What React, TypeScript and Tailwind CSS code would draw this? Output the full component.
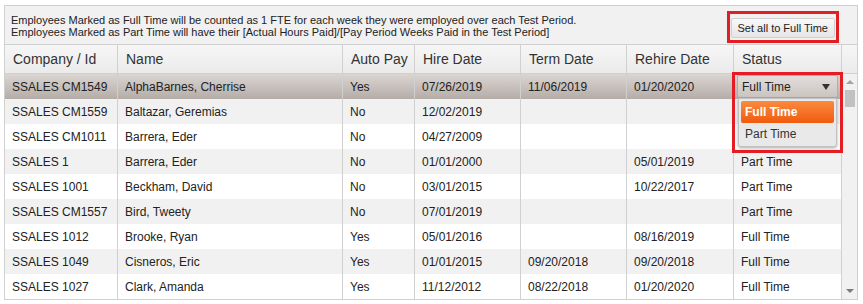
import React from "react";

const rows = [
  { id: "SSALES CM1549", name: "AlphaBarnes, Cherrise", auto: "Yes", hire: "07/26/2019", term: "11/06/2019", rehire: "01/20/2020", status: "Full Time" },
  { id: "SSALES CM1559", name: "Baltazar, Geremias", auto: "No", hire: "12/02/2019", term: "", rehire: "", status: "" },
  { id: "SSALES CM1011", name: "Barrera, Eder", auto: "No", hire: "04/27/2009", term: "", rehire: "", status: "" },
  { id: "SSALES 1", name: "Barrera, Eder", auto: "No", hire: "01/01/2000", term: "", rehire: "05/01/2019", status: "Part Time" },
  { id: "SSALES 1001", name: "Beckham, David", auto: "No", hire: "03/01/2015", term: "", rehire: "10/22/2017", status: "Part Time" },
  { id: "SSALES CM1557", name: "Bird, Tweety", auto: "No", hire: "07/01/2019", term: "", rehire: "", status: "Part Time" },
  { id: "SSALES 1012", name: "Brooke, Ryan", auto: "Yes", hire: "05/01/2016", term: "", rehire: "08/16/2019", status: "Full Time" },
  { id: "SSALES 1049", name: "Cisneros, Eric", auto: "Yes", hire: "01/01/2015", term: "09/20/2018", rehire: "09/20/2018", status: "Full Time" },
  { id: "SSALES 1027", name: "Clark, Amanda", auto: "Yes", hire: "11/12/2012", term: "08/22/2018", rehire: "01/20/2020", status: "Full Time" },
];

const cols = "grid grid-cols-[113px_225px_72px_106px_106px_107px_108px_15px]";

export default function App() {
  return (
    <div className="w-[863px] h-[304px] bg-white pt-[5px] pl-[4px] font-['Liberation_Sans',Arial,sans-serif] text-[#222]">
      <div className="relative w-[854px] border border-[#d0d0d0]">
        {/* info bar */}
        <div className="h-[39px] flex items-center justify-between bg-[#f1f1f1] border-b border-[#d0d0d0] pl-[6px] pr-[18px]">
          <div className="text-[11px] leading-[12px] text-[#222] mt-[1px]">
            <div>Employees Marked as Full Time will be counted as 1 FTE for each week they were employed over each Test Period.</div>
            <div>Employees Marked as Part Time will have their [Actual Hours Paid]/[Pay Period Weeks Paid in the Test Period]</div>
          </div>
          <div className="border-[3px] border-[#e41c24] p-[1px] mt-[4px]">
            <button className="h-[20px] px-[6px] text-[11px] text-[#222] bg-gradient-to-b from-[#f8f8f8] to-[#e6e6e6] border border-[#cfcfcf] rounded-[2px]">
              Set all to Full Time
            </button>
          </div>
        </div>

        {/* header row */}
        <div className={`${cols} h-[29px] bg-gradient-to-b from-[#f6f6f6] to-[#ebebeb] border-b border-[#d0d0d0] text-[14px] text-[#333]`}>
          {["Company / Id", "Name", "Auto Pay", "Hire Date", "Term Date", "Rehire Date", "Status", ""].map((h, i) => (
            <div key={i} className={`flex items-center pl-[8px] ${i < 7 ? "border-r border-[#d0d0d0]" : ""}`}>
              {h}
            </div>
          ))}
        </div>

        {/* body */}
        <div className="flex">
          <div>
            {rows.map((r, i) => {
              const bg =
                i === 0
                  ? "bg-gradient-to-b from-[#dbd6d3] to-[#b5aca7]"
                  : i % 2 === 1
                  ? "bg-[#f1f1f1]"
                  : "bg-white";
              return (
                <div key={i} className={`grid grid-cols-[113px_225px_72px_106px_106px_107px_108px] h-[25px] text-[12px] text-[#222] ${bg}`}>
                  {[r.id, r.name, r.auto, r.hire, r.term, r.rehire, i === 0 ? "" : r.status].map((c, j) => (
                    <div key={j} className="flex items-center pl-[7px] border-r border-[#d0d0d0]">
                      {c}
                    </div>
                  ))}
                </div>
              );
            })}
          </div>
          {/* scrollbar */}
          <div className="w-[15px] h-[225px] bg-[#f1f1f1] flex flex-col items-center">
            <div className="h-[14px] flex items-center justify-center pt-[2px]">
              <div className="w-0 h-0 border-l-[4px] border-r-[4px] border-b-[4px] border-l-transparent border-r-transparent border-b-[#a3a3a3]" />
            </div>
            <div className="w-[10px] h-[17px] bg-[#c1c1c1] mt-[2px] ml-[1px]" />
            <div className="flex-1" />
            <div className="h-[14px] flex items-center justify-center pb-[2px]">
              <div className="w-0 h-0 border-l-[4px] border-r-[4px] border-t-[4px] border-l-transparent border-r-transparent border-t-[#7a7a7a]" />
            </div>
          </div>
        </div>

        {/* open status dropdown */}
        <div className="absolute left-[727px] top-[66px] w-[111px] h-[81px] border-[3px] border-[#e41c24]">
          <div className="ml-[2px] w-[101px] h-[23px] flex items-center justify-between px-[4px] text-[12px] text-[#222] bg-gradient-to-b from-[#e2dedc] to-[#cbc4c0] border border-[#b3aca8] rounded-[2px]">
            <span>Full Time</span>
            <span className="w-0 h-0 border-l-[4px] border-r-[4px] border-t-[6px] border-l-transparent border-r-transparent border-t-[#333] mr-[3px]" />
          </div>
          <div className="ml-[3px] w-[99px] h-[49px] bg-[#e9e9e9] border border-[#c2c2c2] rounded-b-[3px] shadow-[0_1px_3px_rgba(0,0,0,0.35)] p-[2px]">
            <div className="h-[22px] flex items-center pl-[4px] text-[12px] font-bold text-white rounded-[2px] bg-gradient-to-b from-[#fa8a3c] to-[#f05a0a]">
              Full Time
            </div>
            <div className="h-[21px] flex items-center pl-[4px] text-[12px] text-[#333]">Part Time</div>
          </div>
        </div>
      </div>
    </div>
  );
}
